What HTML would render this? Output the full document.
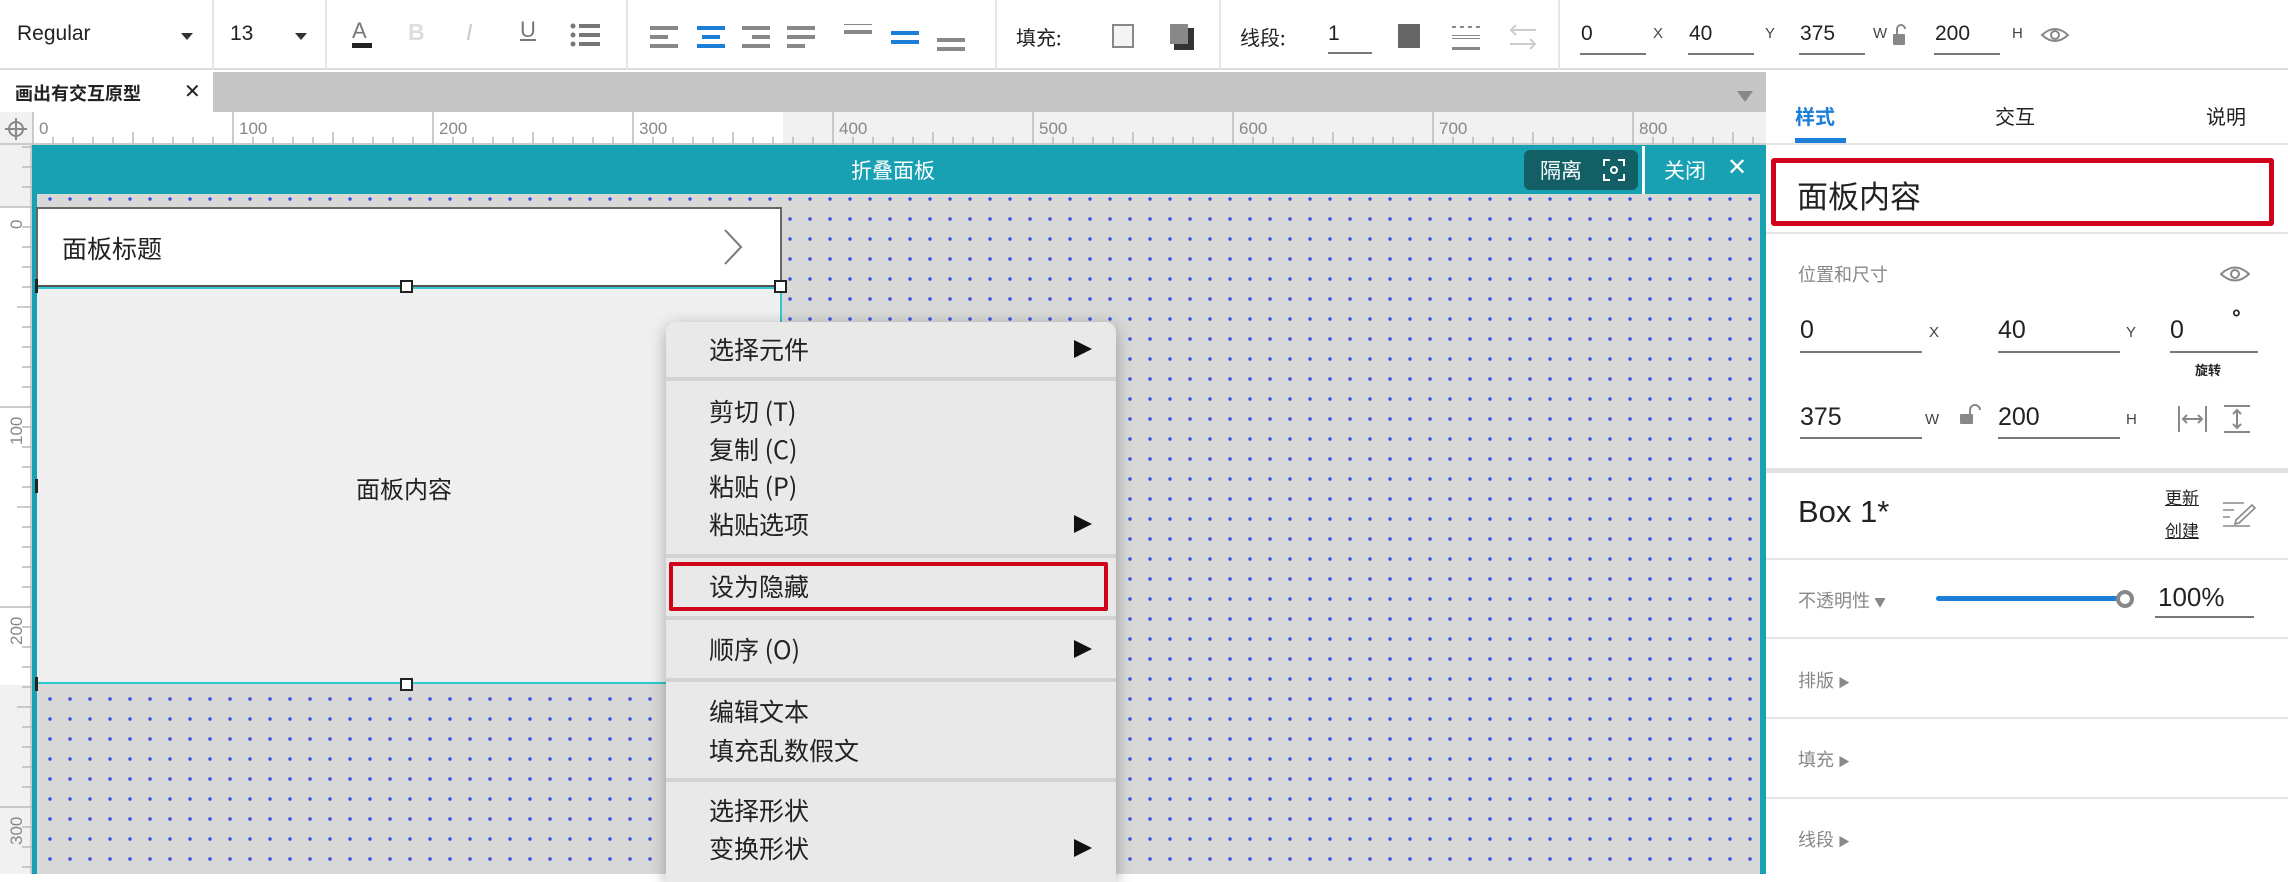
<!DOCTYPE html>
<html><head><meta charset="utf-8">
<style>
*{margin:0;padding:0;box-sizing:border-box}
body{width:2288px;height:874px;overflow:hidden;background:#fff;font-family:"Liberation Sans","Noto Sans CJK SC",sans-serif;color:#333;position:relative}
.a{position:absolute;white-space:nowrap}
.cj{font-family:"Noto Sans CJK SC","Liberation Sans",sans-serif}
.vd{position:absolute;top:0;width:2px;height:70px;background:#e6e6e6}
.ul{position:absolute;height:2px;background:#777}
.sep{position:absolute;left:1766px;width:522px;height:2px;background:#e4e4e4}
.gl{color:#888;font-size:18px}
.mi{position:absolute;left:709px;font-size:25px;color:#222;line-height:30px}
.ar{position:absolute;left:1074px;width:0;height:0;border-top:9px solid transparent;border-bottom:9px solid transparent;border-left:18px solid #111}
.ms{position:absolute;left:666px;width:450px;height:4px;background:#d3d3d3}
</style></head><body>

<!-- toolbar -->
<div class="a" style="left:0;top:0;width:2288px;height:70px;border-bottom:2px solid #dcdcdc;background:#fff"></div>
<div class="a" style="left:17px;top:22px;font-size:21px;color:#222">Regular</div>
<div class="a" style="left:181px;top:33px;border-left:6px solid transparent;border-right:6px solid transparent;border-top:7px solid #333"></div>
<div class="vd" style="left:212px"></div>
<div class="a" style="left:230px;top:22px;font-size:21px;color:#222">13</div>
<div class="a" style="left:295px;top:33px;border-left:6px solid transparent;border-right:6px solid transparent;border-top:7px solid #333"></div>
<div class="vd" style="left:325px"></div>
<div class="a" style="left:352px;top:18px;font-size:22px;color:#777">A</div>
<div class="a" style="left:352px;top:43px;width:20px;height:5px;background:#222"></div>
<div class="a" style="left:408px;top:19px;font-size:23px;font-weight:bold;color:#ddd">B</div>
<div class="a" style="left:466px;top:19px;font-size:23px;font-style:italic;color:#ccc">I</div>
<div class="a" style="left:520px;top:17px;font-size:22px;color:#777;text-decoration:underline">U</div>
<svg class="a" style="left:570px;top:22px" width="30" height="26"><g fill="#777"><circle cx="3" cy="4" r="2.5"/><circle cx="3" cy="13" r="2.5"/><circle cx="3" cy="22" r="2.5"/><rect x="9" y="2" width="21" height="4"/><rect x="9" y="11" width="21" height="4"/><rect x="9" y="20" width="21" height="4"/></g></svg>
<div class="vd" style="left:626px"></div>
<svg class="a" style="left:650px;top:24px" width="320" height="30">
<g fill="#888"><rect x="0" y="2" width="28" height="4"/><rect x="0" y="11" width="18" height="4"/><rect x="0" y="20" width="28" height="4"/></g>
<g fill="#1b7fd8"><rect x="47" y="2" width="28" height="4"/><rect x="52" y="11" width="18" height="4"/><rect x="47" y="20" width="28" height="4"/></g>
<g fill="#888"><rect x="92" y="2" width="28" height="4"/><rect x="102" y="11" width="18" height="4"/><rect x="92" y="20" width="28" height="4"/></g>
<g fill="#888"><rect x="137" y="2" width="28" height="4"/><rect x="137" y="11" width="28" height="4"/><rect x="137" y="20" width="18" height="4"/></g>
<g fill="#888"><rect x="194" y="-3" width="28" height="4"/><rect x="194" y="6" width="28" height="4"/></g>
<g fill="#1b7fd8"><rect x="241" y="7" width="28" height="4"/><rect x="241" y="16" width="28" height="4"/></g>
<g fill="#888"><rect x="287" y="14" width="28" height="4"/><rect x="287" y="23" width="28" height="4"/></g>
</svg>
<div class="vd" style="left:995px"></div>
<div class="a cj" style="left:1016px;top:22px;font-size:20px;color:#222">填充:</div>
<div class="a" style="left:1112px;top:24px;width:22px;height:24px;border:2px solid #888;background:#f4f4f4"></div>
<div class="a" style="left:1174px;top:28px;width:20px;height:22px;background:#333"></div>
<div class="a" style="left:1170px;top:24px;width:18px;height:20px;background:#888"></div>
<div class="vd" style="left:1219px"></div>
<div class="a cj" style="left:1240px;top:22px;font-size:20px;color:#222">线段:</div>
<div class="a" style="left:1328px;top:22px;font-size:21px;color:#222">1</div>
<div class="ul" style="left:1328px;top:52px;width:44px"></div>
<div class="a" style="left:1398px;top:24px;width:22px;height:24px;background:#666"></div>
<svg class="a" style="left:1452px;top:24px" width="28" height="26"><g fill="#888"><rect x="0" y="2" width="4" height="2"/><rect x="8" y="2" width="4" height="2"/><rect x="16" y="2" width="4" height="2"/><rect x="24" y="2" width="4" height="2"/><rect x="0" y="11" width="28" height="1"/><rect x="0" y="14" width="28" height="1"/><rect x="0" y="23" width="28" height="3"/></g></svg>
<svg class="a" style="left:1508px;top:24px" width="30" height="26"><g stroke="#ccc" stroke-width="2" fill="none"><path d="M28 6H3M8 1L3 6L8 11"/><path d="M2 20H27M22 15L27 20L22 25"/></g></svg>
<div class="vd" style="left:1558px"></div>
<div class="a" style="left:1581px;top:22px;font-size:21px;color:#222">0</div><div class="ul" style="left:1580px;top:53px;width:66px"></div>
<div class="a" style="left:1653px;top:25px;font-size:15px;color:#444">X</div>
<div class="a" style="left:1689px;top:22px;font-size:21px;color:#222">40</div><div class="ul" style="left:1688px;top:53px;width:66px"></div>
<div class="a" style="left:1765px;top:25px;font-size:15px;color:#444">Y</div>
<div class="a" style="left:1800px;top:22px;font-size:21px;color:#222">375</div><div class="ul" style="left:1799px;top:53px;width:66px"></div>
<div class="a" style="left:1873px;top:25px;font-size:15px;color:#444">W</div>
<svg class="a" style="left:1893px;top:24px" width="16" height="22"><path d="M4 10V5a4 4 0 0 1 8 0" stroke="#888" stroke-width="2" fill="none"/><rect x="0" y="10" width="12" height="11" rx="1" fill="#888"/></svg>
<div class="a" style="left:1935px;top:22px;font-size:21px;color:#222">200</div><div class="ul" style="left:1934px;top:53px;width:66px"></div>
<div class="a" style="left:2012px;top:25px;font-size:15px;color:#444">H</div>
<svg class="a" style="left:2040px;top:24px" width="30" height="22"><path d="M2 11Q15 -1 28 11Q15 23 2 11Z" stroke="#888" stroke-width="2" fill="none"/><circle cx="15" cy="11" r="4" stroke="#888" stroke-width="2" fill="none"/></svg>

<!-- tab bar -->
<div class="a" style="left:0;top:72px;width:1766px;height:40px;background:#c6c6c6"></div>
<div class="a" style="left:0;top:72px;width:213px;height:40px;background:#fff"></div>
<div class="a cj" style="left:15px;top:80px;font-size:18px;color:#222;font-weight:bold">画出有交互原型</div>
<div class="a" style="left:184px;top:79px;font-size:20px;color:#222">✕</div>
<div class="a" style="left:1737px;top:91px;border-left:8px solid transparent;border-right:8px solid transparent;border-top:11px solid #888"></div>

<!-- rulers -->
<div class="a" style="left:0;top:112px;width:1766px;height:33px;background:#f1f1f1;border-bottom:2px solid #ccc"></div>
<div class="a" style="left:33px;top:112px;width:750px;height:31px;background:#fff"></div>
<svg class="a" style="left:0;top:112px" width="1766" height="33">
<g stroke="#bbb" stroke-width="1.5">
<line x1="33" y1="0" x2="33" y2="33"/><line x1="233" y1="0" x2="233" y2="33"/><line x1="433" y1="0" x2="433" y2="33"/><line x1="633" y1="0" x2="633" y2="33"/><line x1="833" y1="0" x2="833" y2="33"/><line x1="1033" y1="0" x2="1033" y2="33"/><line x1="1233" y1="0" x2="1233" y2="33"/><line x1="1433" y1="0" x2="1433" y2="33"/><line x1="1633" y1="0" x2="1633" y2="33"/>
</g>
<g stroke="#bbb" stroke-width="1.5">
<path d="M53 25V33M73 25V33M93 25V33M113 25V33M133 20V33M153 25V33M173 25V33M193 25V33M213 25V33
M253 25V33M273 25V33M293 25V33M313 25V33M333 20V33M353 25V33M373 25V33M393 25V33M413 25V33
M453 25V33M473 25V33M493 25V33M513 25V33M533 20V33M553 25V33M573 25V33M593 25V33M613 25V33
M653 25V33M673 25V33M693 25V33M713 25V33M733 20V33M753 25V33M773 25V33M793 25V33M813 25V33
M853 25V33M873 25V33M893 25V33M913 25V33M933 20V33M953 25V33M973 25V33M993 25V33M1013 25V33
M1053 25V33M1073 25V33M1093 25V33M1113 25V33M1133 20V33M1153 25V33M1173 25V33M1193 25V33M1213 25V33
M1253 25V33M1273 25V33M1293 25V33M1313 25V33M1333 20V33M1353 25V33M1373 25V33M1393 25V33M1413 25V33
M1453 25V33M1473 25V33M1493 25V33M1513 25V33M1533 20V33M1553 25V33M1573 25V33M1593 25V33M1613 25V33
M1653 25V33M1673 25V33M1693 25V33M1713 25V33M1733 20V33M1753 25V33"/>
</g>
<g fill="#888" font-size="17" font-family="Liberation Sans">
<text x="39" y="22">0</text><text x="239" y="22">100</text><text x="439" y="22">200</text><text x="639" y="22">300</text><text x="839" y="22">400</text><text x="1039" y="22">500</text><text x="1239" y="22">600</text><text x="1439" y="22">700</text><text x="1639" y="22">800</text>
</g>
<g stroke="#888" stroke-width="2" fill="none"><circle cx="16" cy="17" r="7"/><path d="M16 6V28M5 17H27"/></g>
</svg>
<!-- vertical ruler -->
<div class="a" style="left:0;top:145px;width:32px;height:729px;background:#f1f1f1;border-right:2px solid #ccc"></div>
<div class="a" style="left:0;top:207px;width:30px;height:478px;background:#fff"></div>
<svg class="a" style="left:0;top:145px" width="32" height="729">
<g stroke="#bbb" stroke-width="1.5">
<path d="M0 62H32M0 262H32M0 462H32M0 662H32"/>
<path d="M22 2H32M22 22H32M22 42H32M22 82H32M22 102H32M22 122H32M22 142H32M17 162H32M22 182H32M22 202H32M22 222H32M22 242H32M22 282H32M22 302H32M22 322H32M22 342H32M17 362H32M22 382H32M22 402H32M22 422H32M22 442H32M22 482H32M22 502H32M22 522H32M22 542H32M17 562H32M22 582H32M22 602H32M22 622H32M22 642H32M22 682H32M22 702H32M22 722H32"/>
</g>
<g fill="#888" font-size="17" font-family="Liberation Sans">
<text transform="translate(22,84) rotate(-90)">0</text>
<text transform="translate(22,300) rotate(-90)">100</text>
<text transform="translate(22,500) rotate(-90)">200</text>
<text transform="translate(22,700) rotate(-90)">300</text>
</g>
</svg>

<!-- canvas -->
<div class="a" style="left:32px;top:145px;width:1734px;height:729px;background:#18a0b3"></div>
<div class="a" style="left:37px;top:194px;width:1723px;height:680px;background-color:#d8d8d8;background-image:radial-gradient(circle,#3b55e0 1.6px,transparent 2px);background-size:20px 20px;background-position:3px -5px"></div>
<div class="a cj" style="left:851px;top:155px;font-size:21px;color:#fff">折叠面板</div>
<div class="a" style="left:1524px;top:150px;width:114px;height:40px;background:#125f66;border-radius:6px"></div>
<div class="a cj" style="left:1540px;top:155px;font-size:21px;color:#fff">隔离</div>
<svg class="a" style="left:1603px;top:159px" width="22" height="22"><g stroke="#fff" stroke-width="2" fill="none"><path d="M1 7V1H7M15 1H21V7M21 15V21H15M7 21H1V15"/><circle cx="11" cy="11" r="3"/></g></svg>
<div class="a" style="left:1642px;top:146px;width:3px;height:48px;background:#fff"></div>
<div class="a cj" style="left:1664px;top:155px;font-size:21px;color:#fff">关闭</div>
<div class="a" style="left:1727px;top:153px;font-size:24px;color:#fff">✕</div>

<!-- panel header -->
<div class="a" style="left:36px;top:207px;width:746px;height:80px;background:#fff;border:2px solid #666;border-bottom:2px solid #555"></div>
<div class="a cj" style="left:62px;top:230px;font-size:25px;color:#222">面板标题</div>
<svg class="a" style="left:722px;top:228px" width="22" height="38"><path d="M3 2L19 19L3 36" stroke="#777" stroke-width="2" fill="none"/></svg>
<!-- panel content -->
<div class="a" style="left:37px;top:287px;width:745px;height:397px;background:#efefef;border-top:2px solid #2cc9d0;border-bottom:2px solid #2cc9d0;border-right:2px solid #2cc9d0"></div>
<div class="a cj" style="left:356px;top:470px;font-size:24px;color:#222">面板内容</div>
<div class="a" style="left:400px;top:280px;width:13px;height:13px;background:#fff;border:2px solid #222"></div>
<div class="a" style="left:774px;top:280px;width:13px;height:13px;background:#fff;border:2px solid #222"></div>
<div class="a" style="left:400px;top:678px;width:13px;height:13px;background:#fff;border:2px solid #222"></div>
<div class="a" style="left:35px;top:279px;width:3px;height:14px;background:#222"></div>
<div class="a" style="left:35px;top:479px;width:3px;height:14px;background:#222"></div>
<div class="a" style="left:35px;top:677px;width:3px;height:14px;background:#222"></div>

<!-- context menu -->
<div class="a" style="left:666px;top:322px;width:450px;height:560px;background:#e9e9e9;border-radius:10px 10px 0 0;box-shadow:0 4px 16px rgba(0,0,0,.3)"></div>
<div class="mi cj" style="top:334px">选择元件</div><div class="ar" style="top:340px"></div>
<div class="ms" style="top:377px"></div>
<div class="mi cj" style="top:396px">剪切 (T)</div>
<div class="mi cj" style="top:434px">复制 (C)</div>
<div class="mi cj" style="top:471px">粘贴 (P)</div>
<div class="mi cj" style="top:509px">粘贴选项</div><div class="ar" style="top:515px"></div>
<div class="ms" style="top:554px"></div>
<div class="a" style="left:669px;top:562px;width:439px;height:49px;border:4px solid #d0021b;border-radius:2px"></div>
<div class="mi cj" style="top:571px">设为隐藏</div>
<div class="ms" style="top:616px"></div>
<div class="mi cj" style="top:634px">顺序 (O)</div><div class="ar" style="top:640px"></div>
<div class="ms" style="top:678px"></div>
<div class="mi cj" style="top:696px">编辑文本</div>
<div class="mi cj" style="top:735px">填充乱数假文</div>
<div class="ms" style="top:778px"></div>
<div class="mi cj" style="top:795px">选择形状</div>
<div class="mi cj" style="top:833px">变换形状</div><div class="ar" style="top:839px"></div>

<!-- right panel -->
<div class="a" style="left:1766px;top:70px;width:522px;height:804px;background:#fff"></div>
<div class="a cj" style="left:1795px;top:101px;font-size:20px;color:#1b7fd8;font-weight:bold">样式</div>
<div class="a" style="left:1795px;top:138px;width:51px;height:5px;background:#1b7fd8"></div>
<div class="a cj" style="left:1995px;top:101px;font-size:20px;color:#222">交互</div>
<div class="a cj" style="left:2206px;top:101px;font-size:20px;color:#222">说明</div>
<div class="sep" style="top:143px"></div>
<div class="a" style="left:1771px;top:158px;width:503px;height:68px;border:5px solid #d0021b;border-radius:3px"></div>
<div class="a cj" style="left:1797px;top:172px;font-size:31px;color:#222">面板内容</div>
<div class="sep" style="top:232px"></div>
<div class="a cj gl" style="left:1798px;top:261px">位置和尺寸</div>
<svg class="a" style="left:2220px;top:264px" width="30" height="20"><path d="M1 10Q15 -3 29 10Q15 23 1 10Z" stroke="#888" stroke-width="2" fill="none"/><circle cx="15" cy="10" r="4" stroke="#888" stroke-width="2" fill="none"/></svg>
<div class="a" style="left:1800px;top:316px;font-size:25px;color:#222">0</div><div class="ul" style="left:1800px;top:351px;width:122px"></div>
<div class="a" style="left:1929px;top:324px;font-size:15px;color:#444">X</div>
<div class="a" style="left:1998px;top:316px;font-size:25px;color:#222">40</div><div class="ul" style="left:1998px;top:351px;width:122px"></div>
<div class="a" style="left:2126px;top:324px;font-size:15px;color:#444">Y</div>
<div class="a" style="left:2170px;top:316px;font-size:25px;color:#222">0</div><div class="ul" style="left:2170px;top:351px;width:88px"></div>
<div class="a" style="left:2232px;top:305px;font-size:22px;color:#222;font-weight:bold">°</div>
<div class="a cj" style="left:2195px;top:360px;font-size:13px;color:#222;font-weight:bold">旋转</div>
<div class="a" style="left:1800px;top:403px;font-size:25px;color:#222">375</div><div class="ul" style="left:1800px;top:437px;width:122px"></div>
<div class="a" style="left:1925px;top:411px;font-size:15px;color:#444">W</div>
<svg class="a" style="left:1960px;top:404px" width="22" height="22"><path d="M10 10V6a5 5 0 0 1 10 0" stroke="#888" stroke-width="2" fill="none"/><rect x="0" y="10" width="13" height="10" rx="1" fill="#888"/></svg>
<div class="a" style="left:1998px;top:403px;font-size:25px;color:#222">200</div><div class="ul" style="left:1998px;top:437px;width:122px"></div>
<div class="a" style="left:2126px;top:411px;font-size:15px;color:#444">H</div>
<svg class="a" style="left:2178px;top:404px" width="80" height="30"><g stroke="#888" stroke-width="2" fill="none"><path d="M1 2V28M28 2V28M5 15H24M9 11L5 15L9 19M20 11L24 15L20 19"/><path d="M46 2H72M46 28H72M59 6V24M55 10L59 6L63 10M55 20L59 24L63 20"/></g></svg>
<div class="a" style="left:1766px;top:468px;width:522px;height:5px;background:#e2e2e2"></div>
<div class="a" style="left:1798px;top:494px;font-size:31px;color:#222">Box 1*</div>
<div class="a cj" style="left:2165px;top:484px;font-size:17px;color:#222;text-decoration:underline">更新</div>
<div class="a cj" style="left:2165px;top:517px;font-size:17px;color:#222;text-decoration:underline">创建</div>
<svg class="a" style="left:2222px;top:500px" width="34" height="28"><g stroke="#888" stroke-width="1.6" fill="none"><path d="M1 3H22M1 10H12M1 17H8M1 26H28"/><path d="M14 20L30 5L33 8L17 23L13 24Z"/></g></svg>
<div class="sep" style="top:558px"></div>
<div class="a cj gl" style="left:1798px;top:587px">不透明性 <span style="font-size:12px">▼</span></div>
<div class="a" style="left:1936px;top:596px;width:190px;height:5px;background:#1b7fd8;border-radius:3px"></div>
<div class="a" style="left:2116px;top:590px;width:18px;height:18px;border:4px solid #888;background:#fff;border-radius:50%"></div>
<div class="a" style="left:2158px;top:582px;font-size:26px;color:#222">100%</div>
<div class="ul" style="left:2155px;top:616px;width:99px"></div>
<div class="sep" style="top:637px"></div>
<div class="a cj gl" style="left:1798px;top:667px">排版 <span style="font-size:12px">▶</span></div>
<div class="sep" style="top:717px"></div>
<div class="a cj gl" style="left:1798px;top:746px">填充 <span style="font-size:12px">▶</span></div>
<div class="sep" style="top:797px"></div>
<div class="a cj gl" style="left:1798px;top:826px">线段 <span style="font-size:12px">▶</span></div>
</body></html>
